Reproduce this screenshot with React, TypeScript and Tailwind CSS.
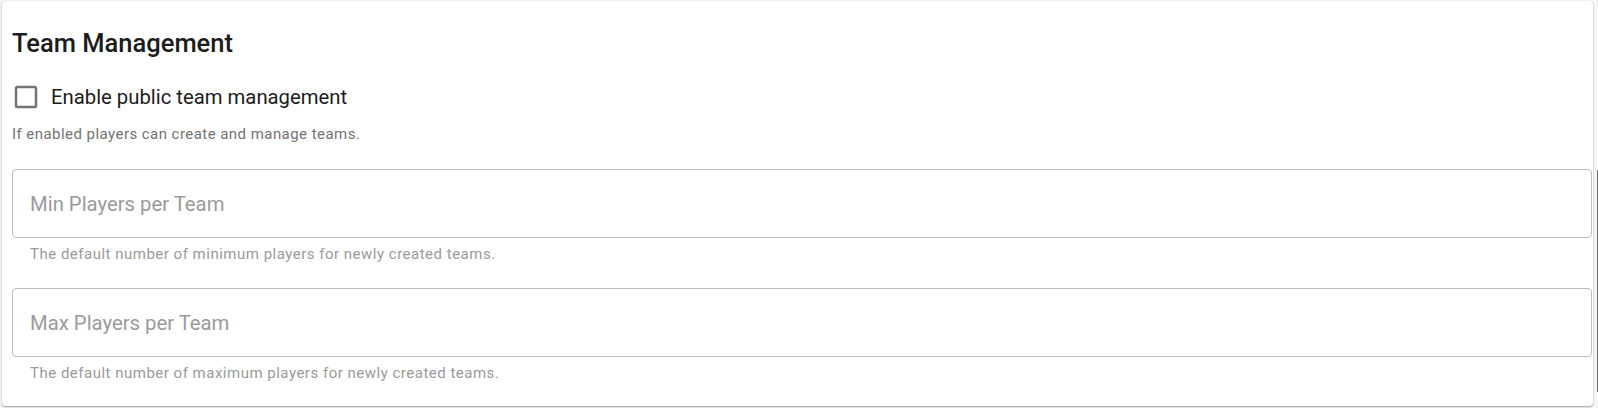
import React from "react";

interface NumberFieldProps {
  label: string;
  hint: string;
}

const NumberField: React.FC<NumberFieldProps> = ({ label, hint }) => {
  return (
    <div className="flex flex-col">
      <div className="h-[69px] rounded-[4px] border border-[#bdbdbd] bg-white flex items-center px-[17px] pt-[2px]">
        <input
          type="number"
          placeholder={label}
          className="w-full bg-transparent outline-none text-[20.3px] text-[#1f1f1f] placeholder:text-[#9a9a9a]"
        />
      </div>
      <p className="mt-[6px] pl-[18px] text-[15px] leading-5 tracking-[0.5px] text-[#9a9a9a]">{hint}</p>
    </div>
  );
};

export default function App() {
  return (
    <div className="flex w-[1598px] h-[408px] bg-[#f6f6f6] font-['Roboto',sans-serif]">
      <div className="flex-1 ml-[2px] mt-[1px] mb-[2px] bg-white rounded-[4px] shadow-[0_1px_2px_rgba(0,0,0,0.35),0_0_1px_rgba(0,0,0,0.15)] pl-[10px] pr-[1px] pt-[26px] pb-[20px]">
        {/* Заголовок секции */}
        <h2 className="text-[25.5px] leading-8 font-medium text-[#1c1c1c]">Team Management</h2>

        <label className="mt-[18px] flex items-center h-10 gap-[10px] cursor-pointer">
          <svg viewBox="0 0 24 24" className="w-[30px] h-[30px] text-[#747474] -ml-[1px]" fill="currentColor">
            <path d="M19,3H5C3.89,3 3,3.89 3,5V19A2,2 0 0,0 5,21H19A2,2 0 0,0 21,19V5C21,3.89 20.1,3 19,3M19,5V19H5V5H19Z" />
          </svg>
          <span className="text-[20.3px] text-[#1c1c1c]">Enable public team management</span>
        </label>
        <p className="mt-[7px] text-[15px] leading-5 tracking-[0.45px] text-[#737373]">
          If enabled players can create and manage teams.
        </p>

        <div className="mt-[25px] flex flex-col gap-[24px]">
          <NumberField
            label="Min Players per Team"
            hint="The default number of minimum players for newly created teams."
          />
          <NumberField
            label="Max Players per Team"
            hint="The default number of maximum players for newly created teams."
          />
        </div>
      </div>
      <div className="w-[5px] flex justify-end">
        <div className="w-[1.5px] mt-[170px] h-[222px] bg-[#6b6b6b]" />
      </div>
    </div>
  );
}
